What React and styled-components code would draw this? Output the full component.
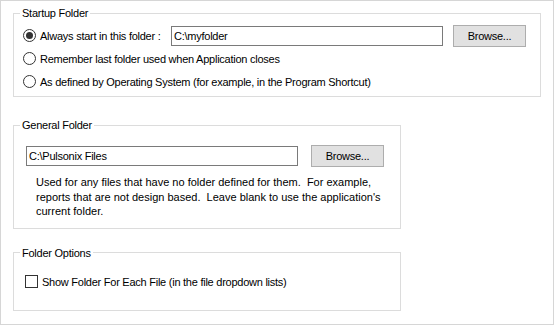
import React from "react";
import styled, { createGlobalStyle } from "styled-components";

const Global = createGlobalStyle`
  html, body { margin: 0; padding: 0; background: #fff; }
  * { box-sizing: border-box; }
  body { font-family: "Liberation Sans", Arial, sans-serif; font-size: 11px; color: #000; }
`;

const Page = styled.div`
  width: 554px;
  height: 325px;
  border: 1px solid #d6d6d6;
  background: #fff;
  padding: 5px 0 0 12px;
  display: flex;
  flex-direction: column;
  align-items: flex-start;
`;

const Group = styled.fieldset`
  margin: ${(p) => p.$mt || 0}px 0 0 0;
  padding: 0;
  border: 1px solid #dcdcdc;
  width: ${(p) => p.$w}px;
  min-width: 0;
`;

const Legend = styled.legend`
  margin-left: 6px;
  padding: 0 2px;
  font-size: 11px;
  line-height: 14px;
  letter-spacing: -0.25px;
`;

const Body = styled.div`
  padding: ${(p) => p.$pad};
  display: flex;
  flex-direction: column;
`;

const Row = styled.div`
  display: flex;
  align-items: center;
  height: ${(p) => p.$h || 23}px;
`;

const Option = styled.label`
  display: flex;
  align-items: center;
  gap: 4px;
  width: ${(p) => (p.$w ? `${p.$w}px` : "auto")};
  flex: none;
  letter-spacing: -0.25px;
  line-height: 14px;
`;

const Radio = styled.span`
  width: 13px;
  height: 13px;
  border-radius: 50%;
  border: 1px solid #333;
  background: #fff;
  display: flex;
  align-items: center;
  justify-content: center;
  flex: none;
  &::after {
    content: "";
    width: 7px;
    height: 7px;
    border-radius: 50%;
    background: ${(p) => (p.$checked ? "#333" : "transparent")};
  }
`;

const Check = styled.span`
  width: 13px;
  height: 13px;
  border: 1px solid #333;
  background: #fff;
  flex: none;
`;

const Input = styled.div`
  width: 272px;
  height: 20px;
  border: 1px solid #7a7a7a;
  background: #fff;
  padding: 0 0 0 2px;
  display: flex;
  align-items: center;
  flex: none;
  letter-spacing: -0.25px;
`;

const Button = styled.div`
  width: 73px;
  height: 22px;
  margin-left: ${(p) => p.$ml}px;
  background: #e1e1e1;
  border: 1px solid #adadad;
  display: flex;
  align-items: center;
  justify-content: center;
  flex: none;
  letter-spacing: -0.25px;
`;

const Note = styled.p`
  margin: 8px 0 0 ${(p) => p.$ml}px;
  width: 370px;
  line-height: 14.5px;
  letter-spacing: 0;
  white-space: nowrap;
`;

export default function App() {
  return (
    <>
      <Global />
      <Page>
        <Group $w={528}>
          <Legend>Startup Folder</Legend>
          <Body $pad="4px 0 3px 9px">
            <Row>
              <Option $w={148}>
                <Radio $checked />
                Always start in this folder :
              </Option>
              <Input>C:\myfolder</Input>
              <Button $ml={10}>Browse...</Button>
            </Row>
            <Row>
              <Option>
                <Radio />
                Remember last folder used when Application closes
              </Option>
            </Row>
            <Row>
              <Option>
                <Radio />
                As defined by Operating System (for example, in the Program Shortcut)
              </Option>
            </Row>
          </Body>
        </Group>

        <Group $w={388} $mt={21}>
          <Legend>General Folder</Legend>
          <Body $pad="12px 0 9px 12px">
            <Row>
              <Input>C:\Pulsonix Files</Input>
              <Button $ml={13}>Browse...</Button>
            </Row>
            <Note $ml={10}>
              Used for any files that have no folder defined for them.&nbsp; For example,
              <br />
              reports that are not design based.&nbsp; Leave blank to use the application's
              <br />
              current folder.
            </Note>
          </Body>
        </Group>

        <Group $w={388} $mt={17}>
          <Legend>Folder Options</Legend>
          <Body $pad="14px 0 20px 11px">
            <Row $h={16}>
              <Option>
                <Check />
                Show Folder For Each File (in the file dropdown lists)
              </Option>
            </Row>
          </Body>
        </Group>
      </Page>
    </>
  );
}
